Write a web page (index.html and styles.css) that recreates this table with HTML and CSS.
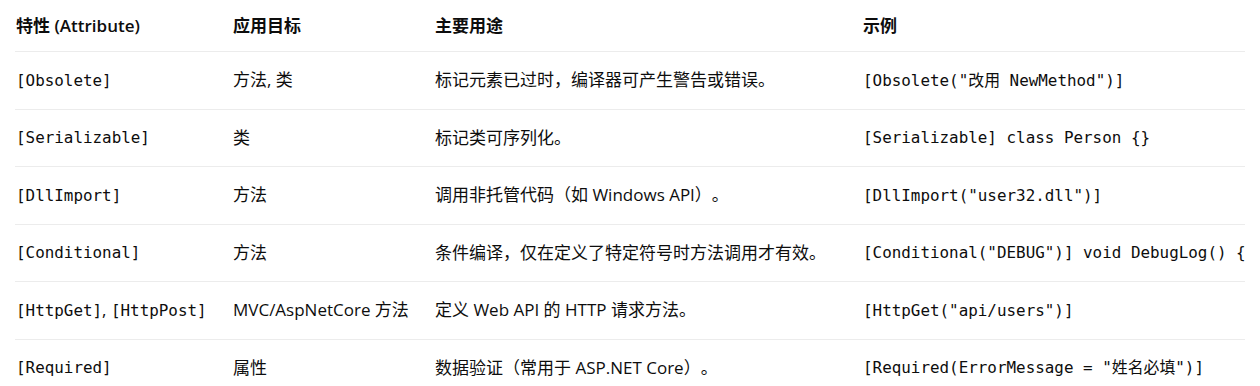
FILE: index.html
```html
<!DOCTYPE html>
<html lang="zh-CN">
<head>
<meta charset="utf-8">
<title>特性表</title>
<link rel="stylesheet" href="styles.css">
</head>
<body>
<table class="attr-table">
  <colgroup>
    <col class="c1"><col class="c2"><col class="c3"><col class="c4">
  </colgroup>
  <thead>
    <tr>
      <th>特性 (Attribute)</th>
      <th>应用目标</th>
      <th>主要用途</th>
      <th>示例</th>
    </tr>
  </thead>
  <tbody>
    <tr>
      <td><code>[Obsolete]</code></td>
      <td>方法, 类</td>
      <td>标记元素已过时，编译器可产生警告或错误。</td>
      <td><code>[Obsolete("改用 NewMethod")]</code></td>
    </tr>
    <tr>
      <td><code>[Serializable]</code></td>
      <td>类</td>
      <td>标记类可序列化。</td>
      <td><code>[Serializable] class Person {}</code></td>
    </tr>
    <tr>
      <td><code>[DllImport]</code></td>
      <td>方法</td>
      <td>调用非托管代码（如 Windows API）。</td>
      <td><code>[DllImport("user32.dll")]</code></td>
    </tr>
    <tr>
      <td><code>[Conditional]</code></td>
      <td>方法</td>
      <td>条件编译，仅在定义了特定符号时方法调用才有效。</td>
      <td><code>[Conditional("DEBUG")] void DebugLog() {</code></td>
    </tr>
    <tr>
      <td><code>[HttpGet]</code>, <code>[HttpPost]</code></td>
      <td>MVC/AspNetCore 方法</td>
      <td>定义 Web API 的 HTTP 请求方法。</td>
      <td><code>[HttpGet("api/users")]</code></td>
    </tr>
    <tr>
      <td><code>[Required]</code></td>
      <td>属性</td>
      <td>数据验证（常用于 ASP.NET Core）。</td>
      <td><code>[Required(ErrorMessage = "姓名必填")]</code></td>
    </tr>
  </tbody>
</table>
</body>
</html>
```

FILE: styles.css
```css
html, body {
  margin: 0;
  padding: 0;
  background: #ffffff;
}

body {
  font-family: "Open Sans", "Noto Sans CJK SC", sans-serif;
  font-size: 17px;
  color: #0d0d0d;
  text-spacing-trim: space-all;
}

.attr-table {
  margin-left: 15px;
  width: 1230px;
  table-layout: fixed;
  border-collapse: separate;
  border-spacing: 0;
}

.c1 { width: 217px; }
.c2 { width: 202px; }
.c3 { width: 428px; }
.c4 { width: 383px; }

.attr-table th,
.attr-table td {
  padding: 0 0 0 1px;
  text-align: left;
  vertical-align: middle;
  white-space: nowrap;
  overflow: hidden;
  line-height: 24px;
}

.attr-table th {
  font-weight: 600;
  height: 51px;
  border-bottom: 1px solid #ececec;
}

.attr-table td {
  font-weight: 400;
  height: 56.5px;
  border-bottom: 1px solid #ececec;
}

.attr-table tbody tr:last-child td {
  border-bottom: none;
}

code {
  font-family: "DejaVu Sans Mono", "Noto Sans CJK SC", monospace;
  font-size: 15.9px;
}
```
